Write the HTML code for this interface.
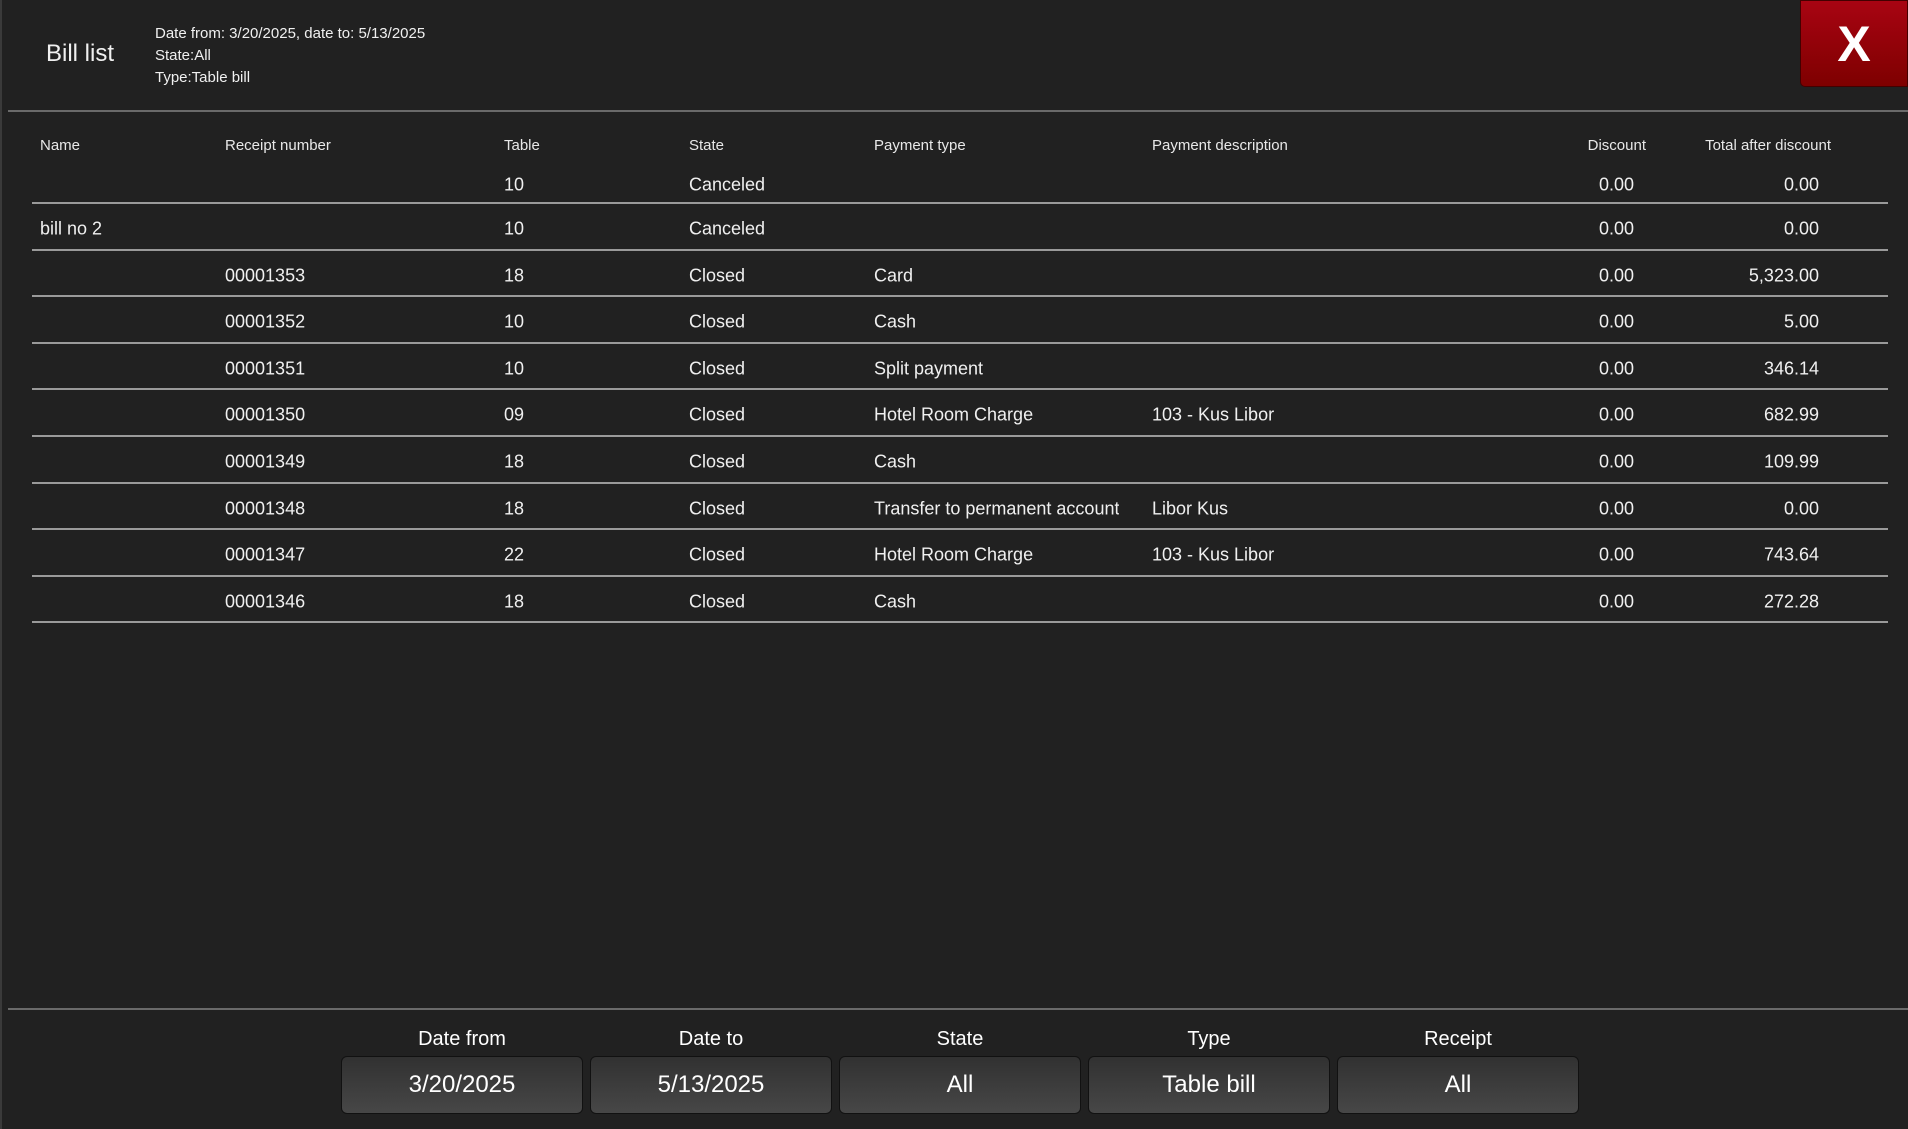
<!DOCTYPE html>
<html><head><meta charset="utf-8"><style>
*{margin:0;padding:0;box-sizing:border-box}
body{width:1908px;height:1129px;background:#212121;color:#f0f0f0;font-family:"Liberation Sans",sans-serif;position:relative;overflow:hidden}
.a{position:absolute;white-space:nowrap}
.hl{position:absolute;height:2px;background:#6a6a6a}
.rl{position:absolute;left:32px;width:1856px;height:2px;background:#9a9a9a}
.h{font-size:15px;top:137px;color:#e8e8e8}
.d{font-size:18px;transform:translateY(-50%)}
.r{text-align:right}
.btn{position:absolute;top:1056px;width:242px;height:58px;border:1px solid #111;border-radius:6px;background:linear-gradient(#313131,#474747);font-size:24px;text-align:center;line-height:56px;color:#fff}
.lab{position:absolute;top:1028px;width:242px;text-align:center;font-size:20px;color:#fff}
</style></head><body>
<div class="a" style="left:0;top:0;width:2px;height:1129px;background:#3a3a3a"></div>
<div class="a" style="left:46px;top:40px;font-size:24px">Bill list</div>
<div class="a" style="left:155px;top:23px;font-size:15px;line-height:22px">Date from: 3/20/2025, date to: 5/13/2025<br>State:All<br>Type:Table bill</div>
<div class="a" style="left:1800px;top:0;width:108px;height:87px;background:linear-gradient(#a80412,#7e0000);border-radius:0 0 0 5px;border:1px solid #400;text-align:center;font-weight:bold;font-size:50px;line-height:87px;color:#fff">X</div>
<div class="hl" style="left:8px;right:0;top:110px"></div>
<div class="a h" style="left:40px">Name</div>
<div class="a h" style="left:225px">Receipt number</div>
<div class="a h" style="left:504px">Table</div>
<div class="a h" style="left:689px">State</div>
<div class="a h" style="left:874px">Payment type</div>
<div class="a h" style="left:1152px">Payment description</div>
<div class="a h r" style="right:262px">Discount</div>
<div class="a h r" style="right:77px">Total after discount</div>
<div id="rows"></div>
<script>
var rows=[["","","10","Canceled","","","0.00","0.00"],["bill no 2","","10","Canceled","","","0.00","0.00"],["","00001353","18","Closed","Card","","0.00","5,323.00"],["","00001352","10","Closed","Cash","","0.00","5.00"],["","00001351","10","Closed","Split payment","","0.00","346.14"],["","00001350","09","Closed","Hotel Room Charge","103 - Kus Libor","0.00","682.99"],["","00001349","18","Closed","Cash","","0.00","109.99"],["","00001348","18","Closed","Transfer to permanent account","Libor Kus","0.00","0.00"],["","00001347","22","Closed","Hotel Room Charge","103 - Kus Libor","0.00","743.64"],["","00001346","18","Closed","Cash","","0.00","272.28"]];
var xs=[40,225,504,689,874,1152],h="";
rows.forEach(function(r,i){var y=185+46.6*i;if(i>0)y=229+46.6*(i-1);
for(var j=0;j<6;j++){if(r[j])h+='<div class="a d" style="left:'+xs[j]+'px;top:'+y+'px;'+(j==4?'max-width:262px;overflow:hidden':'')+'">'+r[j]+'</div>';}
h+='<div class="a d r" style="right:274px;top:'+y+'px">'+r[6]+'</div>';
h+='<div class="a d r" style="right:89px;top:'+y+'px">'+r[7]+'</div>';
h+='<div class="rl" style="top:'+(202+46.6*i)+'px"></div>';});
document.getElementById('rows').innerHTML=h;
</script>
<div class="hl" style="left:8px;right:0;top:1008px"></div>
<div class="lab" style="left:341px">Date from</div><div class="btn" style="left:341px">3/20/2025</div>
<div class="lab" style="left:590px">Date to</div><div class="btn" style="left:590px">5/13/2025</div>
<div class="lab" style="left:839px">State</div><div class="btn" style="left:839px">All</div>
<div class="lab" style="left:1088px">Type</div><div class="btn" style="left:1088px">Table bill</div>
<div class="lab" style="left:1337px">Receipt</div><div class="btn" style="left:1337px">All</div>
</body></html>
